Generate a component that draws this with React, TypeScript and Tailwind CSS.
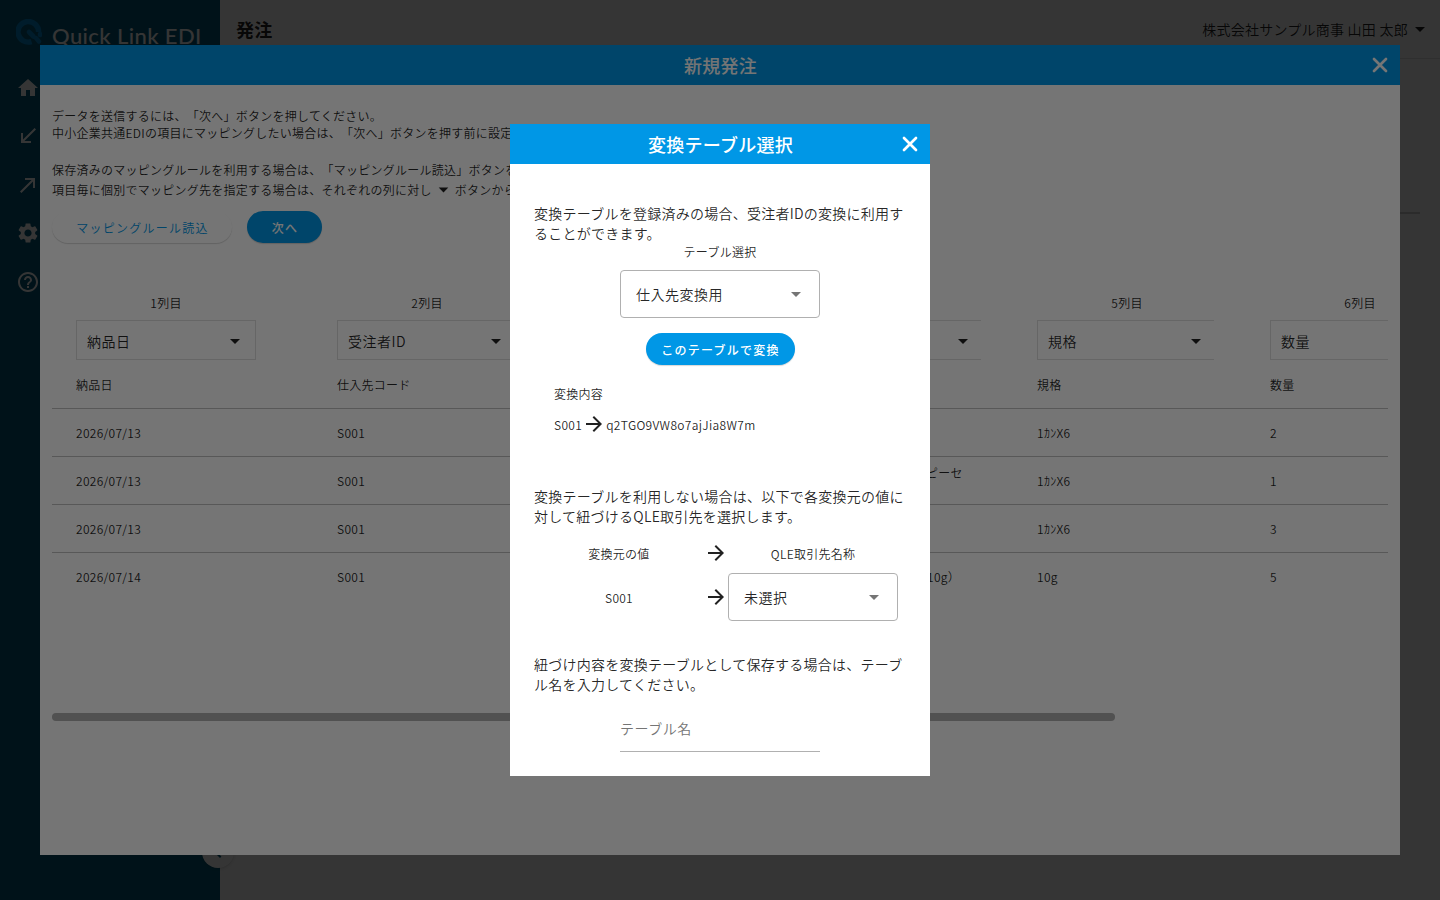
import type { ReactNode } from 'react';
import { MdArrowDropDown, MdArrowForward, MdHelpOutline, MdHome, MdSettings } from 'react-icons/md';
import { MdCallMade, MdCallReceived, MdChevronLeft } from 'react-icons/md';

const columns = [
  { label: '1列目', field: '納品日', source: '納品日' },
  { label: '2列目', field: '受注者ID', source: '仕入先コード' },
  { label: '3列目', field: '発注番号', source: '伝票番号' },
  { label: '4列目', field: '品名', source: '商品名' },
  { label: '5列目', field: '規格', source: '規格' },
  { label: '6列目', field: '数量', source: '数量' },
];

const rows = [
  ['2026/07/13', 'S001', '1001', 'トマト缶', '1ｶﾝX6', '2'],
  ['2026/07/13', 'S001', '1001', 'オリーブ缶詰スライスピーセズ', '1ｶﾝX6', '1'],
  ['2026/07/13', 'S001', '1001', 'コーン缶', '1ｶﾝX6', '3'],
  ['2026/07/14', 'S001', '1002', '乾燥パセリ・業務用（10g）', '10g', '5'],
];

const gridCols = 'grid grid-cols-[261px_233px_234px_233px_233px_233px] pl-6';

function Logo() {
  return (
    <svg width="26" height="26" viewBox="0 0 26 26" fill="none">
      <path
        d="M15.5 22.6A10.3 10.3 0 1 1 22.6 13"
        stroke="#0088cf"
        strokeWidth="5.4"
      />
      <path d="M13 13l4.5 4.5" stroke="#0088cf" strokeWidth="4.6" strokeLinecap="round" />
      <path d="M20 19l3 3.5M24 15v1" stroke="#0088cf" strokeWidth="4.4" strokeLinecap="round" />
    </svg>
  );
}

function CloseIcon() {
  return (
    <svg className="absolute top-2 right-2" width="24" height="24" viewBox="0 0 24 24">
      <path d="M6 6l12 12M18 6L6 18" stroke="currentColor" strokeWidth="2.7" strokeLinecap="round" />
    </svg>
  );
}

function DialogHeader({ title }: { title: string }) {
  return (
    <div className="relative flex h-10 shrink-0 items-center justify-center bg-[#0097e6] text-white">
      <h2 className="pl-px text-lg leading-10 font-medium">{title}</h2>
      <CloseIcon />
    </div>
  );
}

function PillButton({ children, className }: { children: ReactNode; className: string }) {
  return (
    <button
      className={`h-8 rounded-full pt-0.5 pl-px text-xs tracking-[1.25px] shadow-[0_1px_1px_rgba(0,0,0,0.16)] ${className}`}
    >
      {children}
    </button>
  );
}

function Select({ value, className }: { value: string; className: string }) {
  return (
    <div className={`flex h-12 items-center justify-between rounded border border-[#b0b0b0] pr-[11px] pl-[15px] text-sm ${className}`}>
      <span className="tracking-[0.5px]">{value}</span>
      <MdArrowDropDown className="text-[#757575]" size={24} />
    </div>
  );
}

function Sidebar() {
  return (
    <aside className="relative w-[220px] shrink-0 bg-[#005a78] text-white">
      <div className="flex h-[64px] items-center pl-4">
        <Logo />
        <span className="pt-1.5 pl-2.5 font-['Lato'] text-[22px] font-medium tracking-[0.4px]">Quick Link EDI</span>
      </div>
      <nav className="flex flex-col gap-[24.5px] pt-[11.6px] pl-4">
        <MdHome size={24} />
        <MdCallReceived size={24} />
        <MdCallMade size={24} />
        <MdSettings size={24} />
        <MdHelpOutline size={24} />
      </nav>
      <div className="absolute top-[836px] left-[202px] flex size-8 items-center justify-center rounded-full bg-white text-[#005a78] shadow">
        <MdChevronLeft size={24} />
      </div>
    </aside>
  );
}

function OrderDialog() {
  return (
    <section className="flex h-[810px] w-[1360px] flex-col bg-white">
      <DialogHeader title="新規発注" />
      <div className="px-3 pt-[22px] text-xs leading-[17px]">
        <p>データを送信するには、「次へ」ボタンを押してください。</p>
        <p>中小企業共通EDIの項目にマッピングしたい場合は、「次へ」ボタンを押す前に設定してください。</p>
        <p className="mt-5">保存済みのマッピングルールを利用する場合は、「マッピングルール読込」ボタンを押してください。</p>
        <p className="-mt-px flex h-6 items-center">
          項目毎に個別でマッピング先を指定する場合は、それぞれの列に対し
          <MdArrowDropDown size={23} />
          ボタンから選択してください。
        </p>
        <div className="mt-[10px] flex gap-[15px]">
          <PillButton className="w-[180px] bg-white text-[#0097e6]">マッピングルール読込</PillButton>
          <PillButton className="w-[75px] bg-[#0097e6] font-medium text-white">次へ</PillButton>
        </div>

        <div className="mt-[51px] overflow-hidden">
          <div className={gridCols}>
            {columns.map((col, index) => (
              <div key={col.label} className={index === 0 ? 'w-[180px]' : 'w-[177px] overflow-hidden'}>
                <div className="w-[180px]">
                  <p className="text-center">{col.label}</p>
                  <div className="mt-[9px] flex h-10 items-center justify-between border border-[#dedede] pr-2 pl-2.5 text-sm">
                    <span className="pt-0.5 tracking-[0.5px]">{col.field}</span>
                    <MdArrowDropDown className="mt-0.5" size={24} />
                  </div>
                </div>
              </div>
            ))}
          </div>
          <div className={`${gridCols} h-[49px] items-center border-b border-[#c0c0c0]`}>
            {columns.map((col) => (
              <span key={col.label}>{col.source}</span>
            ))}
          </div>
          {rows.map((row, index) => (
            <div
              key={index}
              className={`${gridCols} items-center ${index < rows.length - 1 ? 'h-12 border-b border-[#c0c0c0]' : 'h-[47px]'}`}
            >
              {row.map((cell, i) => (
                <span key={i} className="w-[165px] tracking-[0.3px]">{cell}</span>
              ))}
            </div>
          ))}
        </div>
        <div className="mt-[113px] h-2 w-[1062.5px] rounded-full bg-[#b0b0b0]"></div>
      </div>
    </section>
  );
}

function TableDialog() {
  return (
    <section className="h-[652px] w-[420px] overflow-hidden bg-white text-sm leading-5">
      <DialogHeader title="変換テーブル選択" />
      <div className="px-6 pt-[39px]">
        <p>変換テーブルを登録済みの場合、受注者IDの変換に利用することができます。</p>
        <div className="flex flex-col items-center">
          <p className="text-xs leading-[17px]">テーブル選択</p>
          <Select value="仕入先変換用" className="mt-[10px] w-[200px]" />
          <PillButton className="mt-[15px] w-[149px] bg-[#0097e6] font-medium text-white">
            このテーブルで変換
          </PillButton>
        </div>
        <div className="mt-5 pl-5 text-xs leading-[17px]">
          <p>変換内容</p>
          <div className="mt-2.5 flex h-6 items-center tracking-[0.32px]">
            <span>S001</span>
            <MdArrowForward size={24} />
            <span>q2TGO9VW8o7ajJia8W7m</span>
          </div>
        </div>

        <p className="mt-[50px]">変換テーブルを利用しない場合は、以下で各変換元の値に対して紐づけるQLE取引先を選択します。</p>
        <div className="mt-[15px] grid grid-cols-[170px_24px_170px] items-center text-center text-xs">
          <span className="pt-0.5">変換元の値</span>
          <MdArrowForward size={24} />
          <span className="pt-0.5">QLE取引先名称</span>
        </div>
        <div className="mt-2 grid grid-cols-[170px_24px_170px] items-center text-center text-xs">
          <span className="pt-0.5">S001</span>
          <MdArrowForward size={24} />
          <Select value="未選択" className="w-[170px]" />
        </div>

        <p className="mt-[33px]">紐づけ内容を変換テーブルとして保存する場合は、テーブル名を入力してください。</p>
        <div className="mx-auto mt-2.5 flex h-12 w-[200px] items-center border-b border-[#b0b0b0] pt-px tracking-[0.5px] text-[#757575]">
          テーブル名
        </div>
      </div>
    </section>
  );
}

export default function App() {
  return (
    <div className="relative flex h-[900px] w-[1440px] overflow-hidden bg-[#fafafa] font-['Noto_Sans_CJK_JP',sans-serif] font-[350] tracking-[0.25px] text-black/87 [text-spacing-trim:space-all]">
      <Sidebar />
      <main className="flex-1">
        <header className="flex h-[59px] items-center justify-between border-b border-[#e0e0e0] bg-white pr-2 pl-4">
          <h1 className="text-lg font-bold">発注</h1>
          <div className="flex items-center text-sm">
            株式会社サンプル商事 山田 太郎
            <MdArrowDropDown size={24} />
          </div>
        </header>
        <div className="mx-5 mt-[153px] h-0.5 bg-[#d0d0d0]"></div>
      </main>

      <div className="absolute inset-0 flex items-center justify-center bg-black/54">
        <OrderDialog />
      </div>
      <div className="absolute inset-0 flex items-center justify-center bg-black/54">
        <TableDialog />
      </div>
    </div>
  );
}
